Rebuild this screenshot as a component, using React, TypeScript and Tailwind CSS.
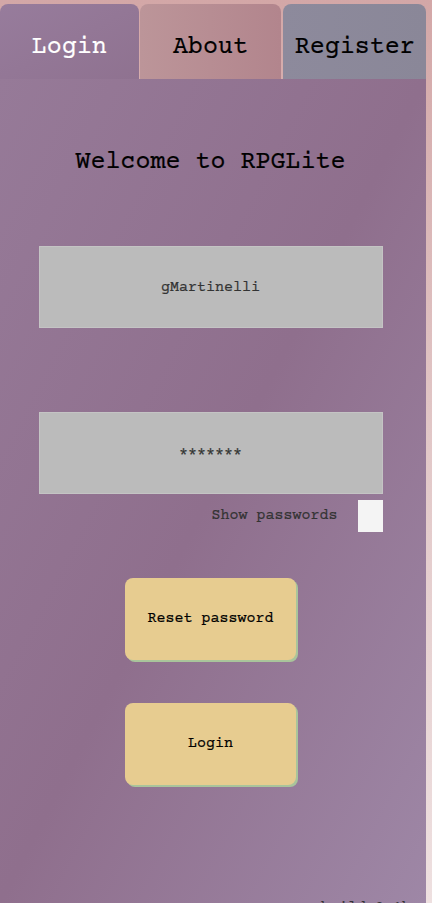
import React, { useState } from 'react'

const mono = { fontFamily: '"Courier Prime", "Nimbus Mono PS", "FreeMono", "Courier New", "Liberation Mono", monospace' }

export default function App() {
  const [tab, setTab] = useState('login')
  const [showPw, setShowPw] = useState(false)

  return (
    <div className="min-h-[903px] w-[432px] overflow-hidden bg-gradient-to-b from-[#d3a7a7] via-[#e2c8c8] to-[#eee0e0] pt-1 [-webkit-text-stroke:0.2px_currentColor]" style={mono}>
      <div className="w-[426px]">
        <div className="flex h-[75px] gap-[1px]">
          <button onClick={() => setTab('login')} className="w-[139px] rounded-t-lg bg-gradient-to-br from-[#977c9c] to-[#8f7290] pt-[12px] text-[25px] text-white">Login</button>
          <button onClick={() => setTab('about')} className="w-[142px] rounded-t-lg bg-gradient-to-r from-[#bc9599] to-[#b2858d] pt-[12px] text-[25px] text-black">About</button>
          <button onClick={() => setTab('register')} className="ml-[1px] w-[143px] rounded-t-lg bg-gradient-to-r from-[#8d8a9c] to-[#8a8798] pt-[12px] text-[25px] text-black">Register</button>
        </div>

        <div className="flex h-[824px] flex-col items-center bg-gradient-to-br from-[#967a98] via-[#8f6f8d] to-[#9e87a6] pr-[5px]">
          <h1 className="mt-[69px] text-[25px] leading-[30px] text-black">Welcome to RPGLite</h1>

          <input
            defaultValue="gMartinelli"
            className="mt-[68px] h-[82px] w-[344px] border border-[#c4c4c4] bg-[#bbbbbb] text-center text-[15px] text-[#333] outline-none"
          />
          <input
            type="text"
            value={showPw ? 'secret1' : '*******'}
            readOnly
            className="mt-[84px] h-[82px] w-[344px] border border-[#c4c4c4] bg-[#bbbbbb] text-center text-[15px] text-[#333] outline-none"
          />
          <label className="mt-[6px] flex w-[344px] items-center justify-end gap-5 text-[15px] text-[#333]">
            Show passwords
            <span
              onClick={() => setShowPw(!showPw)}
              className="h-[32px] w-[25px] bg-[#f4f4f4]"
            />
          </label>

          <button className="mt-[46px] h-[82px] w-[171px] rounded-lg bg-[#e7cc90] text-[15px] text-black shadow-[2px_2px_0_#a9c49b]">
            Reset password
          </button>
          <button className="mt-[43px] h-[82px] w-[171px] rounded-lg bg-[#e7cc90] text-[15px] text-black shadow-[2px_2px_0_#a9c49b]">
            Login
          </button>

          <div className="mt-auto mb-[-16px] self-end pr-[10px] text-[15px] text-[#333]">build 0.1b</div>
        </div>
      </div>
    </div>
  )
}
